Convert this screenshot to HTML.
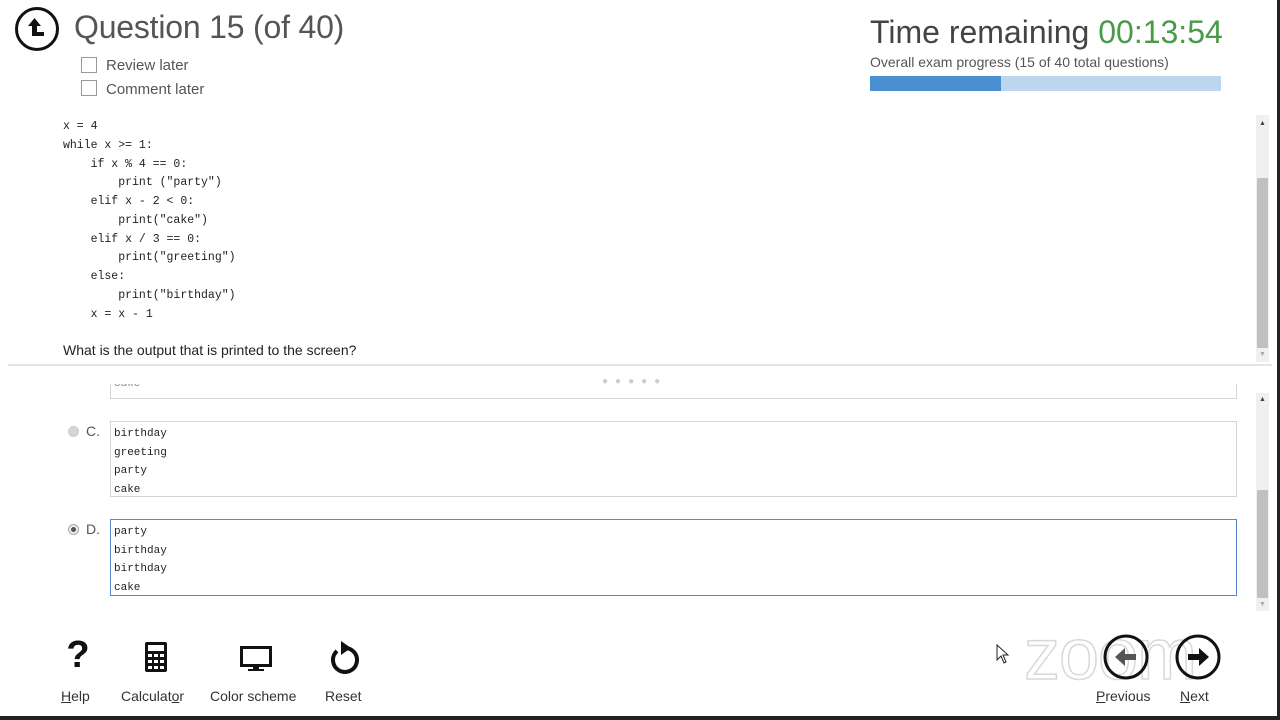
<!DOCTYPE html>
<html><head><meta charset="utf-8"><style>
*{margin:0;padding:0;box-sizing:border-box}
body{width:1280px;height:720px;overflow:hidden;background:#fff;font-family:"Liberation Sans",sans-serif;color:#333;position:relative}
.a{position:absolute}
.mono{font-family:"Liberation Mono",monospace;font-size:11px;color:#222}
.cb{width:16px;height:16px;border:1px solid #999;background:#fff}
.lbl{font-size:15px;color:#555}
.box{border:1px solid #d4d4d4;background:#fff}
.code div{height:18.75px;line-height:18.75px;white-space:pre;font-size:11.5px}
.opt div{height:18.6px;line-height:18.6px}
.sb{background:#f0f0f0}
.th{background:#c0c0c0}
.tool{font-size:14px;color:#333;text-align:center}
</style></head><body>
<div class="a" style="left:1277px;top:0;width:3px;height:720px;background:#222"></div>
<div class="a" style="left:0;top:716px;width:1280px;height:4px;background:#222"></div>

<svg class="a" style="left:14px;top:6px" width="46" height="46" viewBox="0 0 46 46"><circle cx="23" cy="23" r="20.5" fill="none" stroke="#111" stroke-width="3"/><path d="M18 30 H30 V26 H23 V20 H27 L20.5 12 L14 20 H18 Z" fill="#111"/></svg>
<div class="a" style="left:74px;top:9px;font-size:32px;color:#555;font-weight:300;letter-spacing:-0.2px">Question 15 (of 40)</div>
<div class="a cb" style="left:81px;top:57px"></div>
<div class="a lbl" style="left:106px;top:57px">Review later</div>
<div class="a cb" style="left:81px;top:80px"></div>
<div class="a lbl" style="left:106px;top:81px">Comment later</div>

<div class="a" style="left:870px;top:14px;font-size:32px;color:#444">Time remaining <span style="color:#4a9a4a">00:13:54</span></div>
<div class="a" style="left:870px;top:54px;font-size:14px;color:#555">Overall exam progress (15 of 40 total questions)</div>
<div class="a" style="left:870px;top:76px;width:351px;height:15px;background:#bcd6f0"></div>
<div class="a" style="left:870px;top:76px;width:131px;height:15px;background:#4b8fd3"></div>

<div class="a mono code" style="left:63px;top:118px">
<div>x = 4</div><div>while x &gt;= 1:</div><div>    if x % 4 == 0:</div><div>        print ("party")</div><div>    elif x - 2 &lt; 0:</div><div>        print("cake")</div><div>    elif x / 3 == 0:</div><div>        print("greeting")</div><div>    else:</div><div>        print("birthday")</div><div>    x = x - 1</div></div>
<div class="a" style="left:63px;top:342px;font-size:14px;color:#222">What is the output that is printed to the screen?</div>

<div class="a sb" style="left:1256px;top:115px;width:13px;height:247px"></div>
<div class="a th" style="left:1257px;top:178px;width:11px;height:170px"></div>
<div class="a" style="left:1259px;top:120px;font-size:7px;color:#444">▲</div>
<div class="a" style="left:1259px;top:351px;font-size:7px;color:#aaa">▼</div>

<div class="a" style="left:8px;top:364px;width:1264px;height:2px;background:#e4e4e4"></div>
<div class="a" style="left:602px;top:376px;font-size:10px;color:#ccc;letter-spacing:7px">●●●●●</div>

<div class="a box" style="left:110px;top:384px;width:1127px;height:15px;border-top:none;overflow:hidden"><div class="mono" style="margin:-6px 0 0 3px;color:#888">cake</div></div>

<div class="a" style="left:68px;top:426px;width:11px;height:11px;border-radius:50%;background:#d6d6d6;border:1px solid #ccc"></div>
<div class="a" style="left:86px;top:423px;font-size:14px;color:#555">C.</div>
<div class="a box opt mono" style="left:110px;top:421px;width:1127px;height:76px;padding:3px 0 0 3px"><div>birthday</div><div>greeting</div><div>party</div><div>cake</div></div>

<div class="a" style="left:68px;top:524px;width:11px;height:11px;border-radius:50%;background:#eee;border:1px solid #aaa"><div style="margin:2px;width:5px;height:5px;border-radius:50%;background:#555"></div></div>
<div class="a" style="left:86px;top:521px;font-size:14px;color:#555">D.</div>
<div class="a opt mono" style="left:110px;top:519px;width:1127px;height:77px;padding:3px 0 0 3px;border:1px solid #5a86cc"><div>party</div><div>birthday</div><div>birthday</div><div>cake</div></div>

<div class="a sb" style="left:1256px;top:393px;width:13px;height:218px"></div>
<div class="a th" style="left:1257px;top:490px;width:11px;height:108px"></div>
<div class="a" style="left:1259px;top:396px;font-size:7px;color:#444">▲</div>
<div class="a" style="left:1259px;top:601px;font-size:7px;color:#aaa">▼</div>

<div class="a" style="left:64px;top:634px;font-size:38px;font-weight:bold;color:#111;width:28px;text-align:center">?</div>
<div class="a tool" style="left:61px;top:688px"><u>H</u>elp</div>
<svg class="a" style="left:144px;top:641px" width="24" height="32" viewBox="0 0 24 32"><rect x="1" y="1" width="22" height="30" rx="2" fill="#111"/><rect x="4" y="4" width="16" height="6" fill="#fff"/><g fill="#fff"><rect x="4" y="13" width="4" height="3"/><rect x="10" y="13" width="4" height="3"/><rect x="16" y="13" width="4" height="3"/><rect x="4" y="19" width="4" height="3"/><rect x="10" y="19" width="4" height="3"/><rect x="16" y="19" width="4" height="3"/><rect x="4" y="25" width="4" height="3"/><rect x="10" y="25" width="4" height="3"/><rect x="16" y="25" width="4" height="3"/></g></svg>
<div class="a tool" style="left:121px;top:688px">Calculat<u>o</u>r</div>
<svg class="a" style="left:240px;top:646px" width="32" height="26" viewBox="0 0 32 26"><rect x="1.5" y="1.5" width="29" height="18" fill="none" stroke="#111" stroke-width="3"/><rect x="13" y="20" width="6" height="3" fill="#111"/><rect x="8" y="23" width="16" height="2" fill="#111"/></svg>
<div class="a tool" style="left:210px;top:688px">Color scheme</div>
<svg class="a" style="left:327px;top:639px" width="34" height="36" viewBox="0 0 34 36"><path d="M10 12 A12 12 0 1 0 17 9" fill="none" stroke="#111" stroke-width="4"/><path d="M14 2 L24 9 L14 16 Z" fill="#111"/></svg>
<div class="a tool" style="left:325px;top:688px">Reset</div>

<div class="a" style="left:1024px;top:614px;font-size:72px;color:transparent;-webkit-text-stroke:1.5px #d8d8d8;letter-spacing:-1px">zoom</div>
<svg class="a" style="left:996px;top:644px" width="14" height="20" viewBox="0 0 14 20"><path d="M1 1 L1 16 L5 12 L8 19 L10 18 L7 11 L12 11 Z" fill="#fff" stroke="#222" stroke-width="1"/></svg>
<svg class="a" style="left:1103px;top:634px" width="46" height="46" viewBox="0 0 46 46"><circle cx="23" cy="23" r="21" fill="none" stroke="#111" stroke-width="3"/><path d="M33 20 H22 V14 L12 23 L22 32 V26 H33 Z" fill="#555"/></svg>
<div class="a tool" style="left:1096px;top:688px"><u>P</u>revious</div>
<svg class="a" style="left:1175px;top:634px" width="46" height="46" viewBox="0 0 46 46"><circle cx="23" cy="23" r="21" fill="none" stroke="#111" stroke-width="3"/><path d="M13 20 H24 V14 L34 23 L24 32 V26 H13 Z" fill="#111"/></svg>
<div class="a tool" style="left:1180px;top:688px"><u>N</u>ext</div>
</body></html>
